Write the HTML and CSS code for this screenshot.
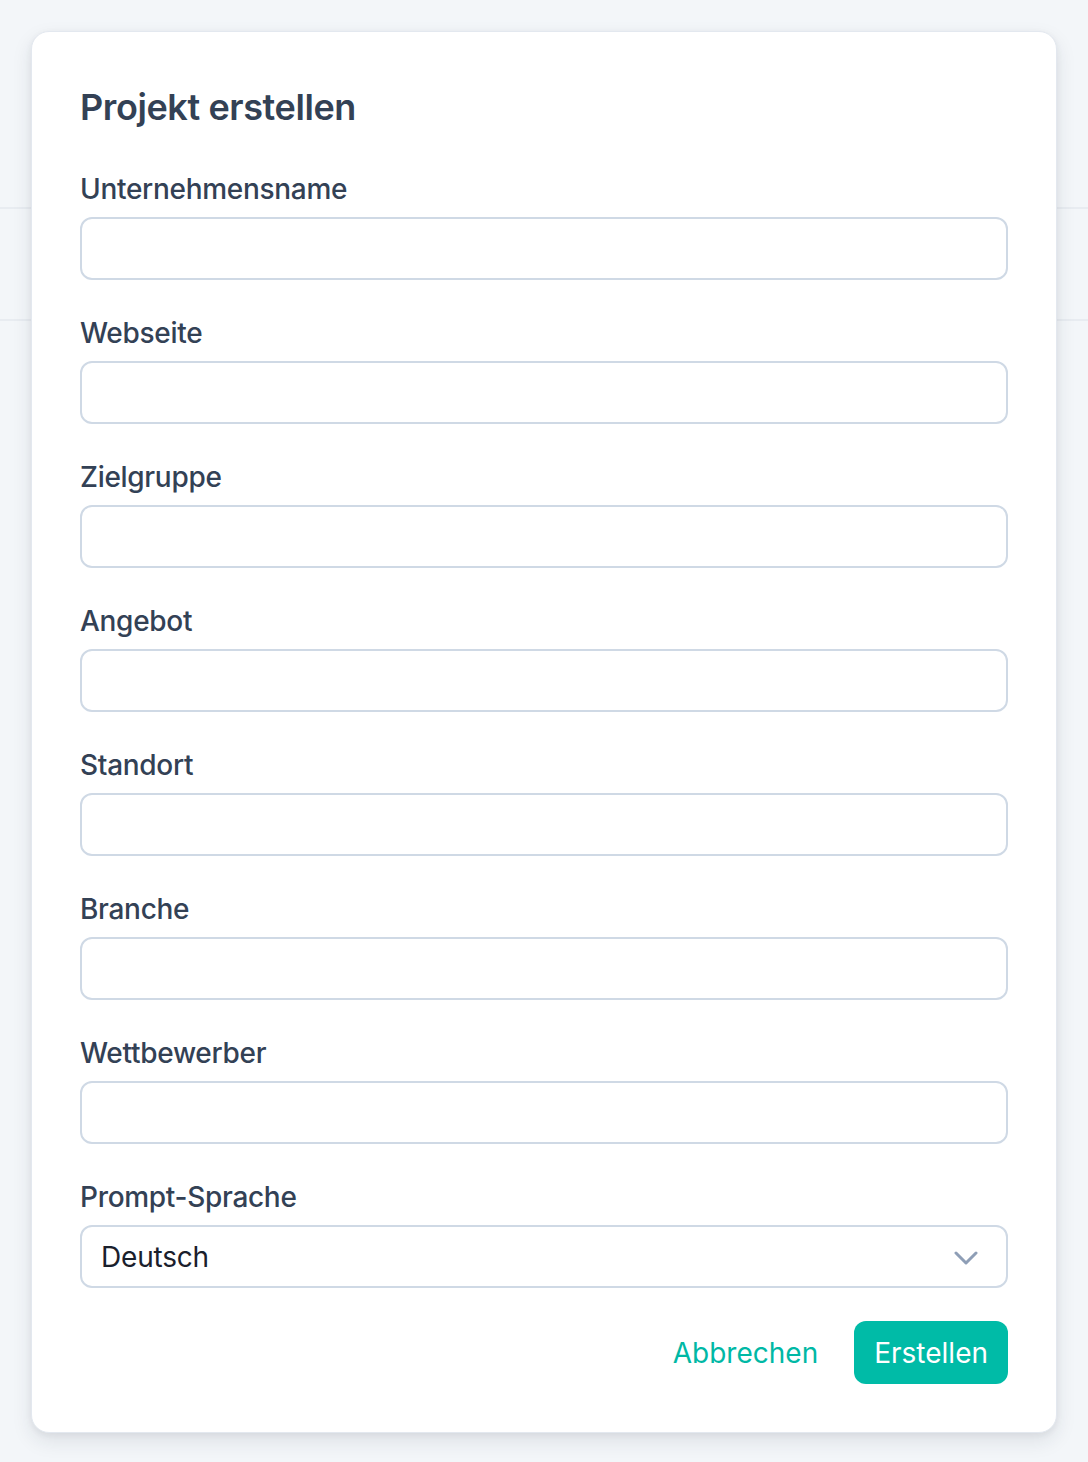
FILE: index.html
```html
<!DOCTYPE html>
<html lang="de">
<head>
<meta charset="utf-8">
<title>Projekt erstellen</title>
<link rel="stylesheet" href="styles.css">
</head>
<body>
<div class="page">
  <div class="bg-header"></div>
  <div class="bg-row"></div>

  <div class="modal">
    <h2 class="modal-title">Projekt erstellen</h2>
    <form class="form">
      <div class="field">
        <label class="label">Unternehmensname</label>
        <input class="input" type="text">
      </div>
      <div class="field">
        <label class="label">Webseite</label>
        <input class="input" type="text">
      </div>
      <div class="field">
        <label class="label">Zielgruppe</label>
        <input class="input" type="text">
      </div>
      <div class="field">
        <label class="label">Angebot</label>
        <input class="input" type="text">
      </div>
      <div class="field">
        <label class="label">Standort</label>
        <input class="input" type="text">
      </div>
      <div class="field">
        <label class="label">Branche</label>
        <input class="input" type="text">
      </div>
      <div class="field">
        <label class="label">Wettbewerber</label>
        <input class="input" type="text">
      </div>
      <div class="field">
        <label class="label">Prompt-Sprache</label>
        <div class="select">
          <span class="select-value">Deutsch</span>
          <svg class="chevron" width="24" height="14" viewBox="0 0 24 14" fill="none">
            <path d="M2 2 L12 12 L22 2" stroke="#8e9eb6" stroke-width="3" stroke-linecap="round" stroke-linejoin="round"/>
          </svg>
        </div>
      </div>
      <div class="actions">
        <button type="button" class="btn-link">Abbrechen</button>
        <button type="button" class="btn-primary">Erstellen</button>
      </div>
    </form>
  </div>
</div>
</body>
</html>
```

FILE: styles.css
```css
* { box-sizing: border-box; }

html, body {
  margin: 0;
  padding: 0;
}

body {
  background: #f3f6f9;
  font-family: Inter, "Noto Sans", "Liberation Sans", sans-serif;
  width: 1088px;
  height: 1462px;
  overflow: hidden;
}

.page {
  position: relative;
  width: 1088px;
  height: 1462px;
}

.bg-header {
  height: 209px;
  border-bottom: 2px solid #e8ecf1;
}

.bg-row {
  height: 112px;
  border-bottom: 2px solid #e8ecf1;
}

.modal {
  position: absolute;
  left: 31px;
  top: 31px;
  width: 1026px;
  height: 1402px;
  background: #ffffff;
  border: 1px solid #e3e8ef;
  border-radius: 18px;
  box-shadow: 0 8px 20px rgba(30, 41, 59, 0.10), 0 2px 6px rgba(30, 41, 59, 0.06);
  padding: 47px 48px 48px 48px;
}

.modal-title {
  margin: 0;
  font-size: 36px;
  line-height: 56px;
  font-weight: 600;
  color: #334155;
  letter-spacing: -0.4px;
}

.form {
  display: flex;
  flex-direction: column;
  gap: 33px;
  margin-top: 34px;
}

.field {
  display: flex;
  flex-direction: column;
}

.label {
  font-size: 28px;
  line-height: 40px;
  font-weight: 500;
  color: #334155;
  margin-bottom: 8px;
  letter-spacing: -0.3px;
}

.input {
  height: 63px;
  width: 100%;
  border: 2px solid #cfd9e5;
  border-radius: 12px;
  background: #fff;
  font-family: inherit;
  font-size: 28px;
  padding: 0 18px;
  outline: none;
}

.select {
  height: 63px;
  border: 2px solid #cfd9e5;
  border-radius: 12px;
  display: flex;
  align-items: center;
  justify-content: space-between;
  padding: 0 28px 0 19px;
}

.select-value {
  font-size: 28px;
  color: #1a202c;
  font-weight: 400;
  letter-spacing: -0.2px;
}

.chevron {
  display: block;
  margin-top: 2px;
}

.actions {
  display: flex;
  justify-content: flex-end;
  align-items: center;
  gap: 36px;
}

.btn-link {
  background: none;
  border: none;
  padding: 0;
  font-family: inherit;
  font-size: 28px;
  font-weight: 400;
  color: #00b8a5;
  height: 63px;
}

.btn-primary {
  height: 63px;
  padding: 0 20px;
  border: none;
  border-radius: 12px;
  background: #00bba7;
  color: #ffffff;
  font-family: inherit;
  font-size: 28px;
  font-weight: 400;
}
```
